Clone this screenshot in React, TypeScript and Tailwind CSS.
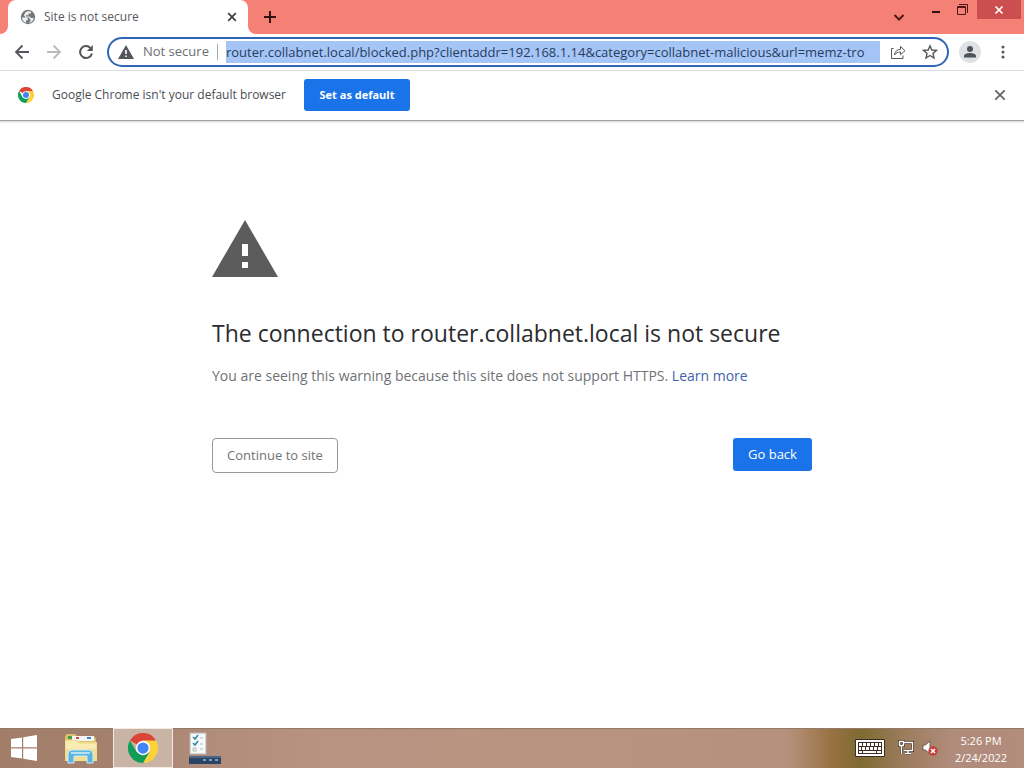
import type { ReactNode } from "react";

const url =
  "router.collabnet.local/blocked.php?clientaddr=192.168.1.14&category=collabnet-malicious&url=memz-tro";

function ChromeLogo({ className }: { className: string }) {
  return (
    <svg viewBox="0 0 48 48" className={className} aria-hidden="true">
      <path d="M24 24 L3.2 12 A24 24 0 0 1 44.8 12 Z" fill="#db4437" />
      <path d="M24 12 H44.8 A24 24 0 0 1 24 48 L34.4 30 Z" fill="#fdd13a" />
      <path d="M3.2 12 L13.6 30 L24 36 L34.4 30 L24 48 A24 24 0 0 1 3.2 12 Z" fill="#109d58" />
      <circle cx="24" cy="24" r="11.5" fill="#fff" />
      <circle cx="24" cy="24" r="9" fill="#4285f4" />
    </svg>
  );
}

function Globe() {
  return (
    <svg viewBox="0 0 16 16" className="h-4 w-4 shrink-0" aria-hidden="true">
      <circle cx="8" cy="8" r="7.2" fill="#74777b" />
      <path d="M2 8.5 L5.5 8.5 Q8 8.5 8 10.5 L7 11.5 L6 11.5 L6 14 C3.5 13 2 11 2 8.5Z M8.5 2 L11 2.8 V4.5 H8.5 V6.2 H6 V7.5 H9.5 L11 9 H13.8 C13.5 11.7 11 13.8 8.8 14.2 L10.5 12 V10.5 L8.5 8.5 H5.8 L4 6.5 C4.5 4 6 2.2 8.5 2Z" fill="#eceded" />
    </svg>
  );
}

function Stroke({ d, className, width = 2 }: { d: string; className: string; width?: number }) {
  return (
    <svg viewBox="0 0 16 16" className={className} fill="none" stroke="currentColor" strokeWidth={width} aria-hidden="true">
      <path d={d} />
    </svg>
  );
}

function IconButton({ label, className, children }: { label: string; className: string; children: ReactNode }) {
  return (
    <button type="button" aria-label={label} className={`flex shrink-0 items-center justify-center ${className}`}>
      {children}
    </button>
  );
}

function TabStrip() {
  return (
    <div className="flex h-[34px] items-start bg-[#f58176]">
      <div className="flex h-[34px] items-end">
        <svg viewBox="0 0 8 8" className="h-2 w-2" aria-hidden="true">
          <path d="M8 0 V8 H0 A8 8 0 0 0 8 0" fill="#fff" />
        </svg>
        <div className="flex h-[34px] w-60 items-center rounded-t-lg bg-white pr-2 pl-3">
          <Globe />
          <span className="ml-2 flex-1 text-xs text-[#55595d]">Site is not secure</span>
          <IconButton label="Close tab" className="h-4 w-4 text-[#3c4043]">
            <Stroke d="M4.2 4.2 L11.8 11.8 M11.8 4.2 L4.2 11.8" width={1.7} className="h-4 w-4" />
          </IconButton>
        </div>
        <svg viewBox="0 0 8 8" className="h-2 w-2" aria-hidden="true">
          <path d="M0 0 V8 H8 A8 8 0 0 1 0 0" fill="#fff" />
        </svg>
      </div>
      <IconButton label="New tab" className="h-[34px] w-7 text-[#32110f]">
        <Stroke d="M8 2 V14 M2 8 H14" className="h-4 w-4" />
      </IconButton>
      <div className="flex-1" />
      <IconButton label="Search tabs" className="h-[34px] w-6 text-[#4d1815]">
        <Stroke d="M3.5 6 L8 10.5 L12.5 6" className="h-4 w-4" />
      </IconButton>
      <IconButton label="Minimize" className="ml-3 h-5 w-[26px] text-[#32110f]">
        <Stroke d="M4 10 H12" className="h-4 w-4" />
      </IconButton>
      <IconButton label="Restore" className="h-[18px] w-[26px] text-[#4d1815]">
        <Stroke d="M3.5 5.5 H11.5 V13.5 H3.5 Z M3.5 6.5 H11.5 M5 3.5 H13.5 V12" width={1} className="h-4 w-4" />
      </IconButton>
      <IconButton label="Close" className="mr-[3px] ml-[2px] h-[19px] w-11 bg-[#ca4f4e] text-white">
        <Stroke d="M4.5 4.5 L11.5 11.5 M11.5 4.5 L4.5 11.5" width={1.7} className="h-4 w-4" />
      </IconButton>
    </div>
  );
}

function Toolbar() {
  return (
    <div className="flex h-[37px] items-center border-b border-[#dcdee1] px-2 text-[#53565a]">
      <IconButton label="Back" className="h-7 w-7">
        <Stroke d="M15 8 H2 M8.5 1.5 L2 8 L8.5 14.5" width={1.8} className="h-4 w-4" />
      </IconButton>
      <IconButton label="Forward" className="ml-1 h-7 w-7 text-[#b9bbbd]">
        <Stroke d="M1 8 H14 M7.5 1.5 L14 8 L7.5 14.5" width={1.8} className="h-4 w-4" />
      </IconButton>
      <IconButton label="Reload" className="ml-1 h-7 w-7">
        <svg viewBox="0 0 16 16" className="h-4 w-4" fill="none" stroke="currentColor" strokeWidth="2" aria-hidden="true">
          <path d="M13.9 9.5 A6 6 0 1 1 12.4 3.9" />
          <path d="M14.8 1 V7 H8.8 Z" fill="currentColor" stroke="none" />
        </svg>
      </IconButton>
      <div className="ml-[7px] flex h-[30px] min-w-0 flex-1 items-center rounded-full border-2 border-[#3166b6] bg-white pr-[7px] pl-2">
        <button type="button" className="flex shrink-0 items-center text-[13px] text-[#6b6e72]">
          <svg viewBox="0 0 18 16" className="mr-2 h-4 w-[18px]" aria-hidden="true">
            <path d="M9 1 L17 15 H1 Z" fill="#53565a" />
            <path d="M8.2 6 H9.8 V10 H8.2 Z M8.2 11.4 H9.8 V13 H8.2 Z" fill="#fff" />
          </svg>
          Not secure
        </button>
        <div className="mx-2 h-4 w-px shrink-0 bg-[#a6a8ab]" />
        <input
          aria-label="Address and search bar"
          defaultValue={url}
          className="h-[22px] min-w-0 flex-1 bg-[#a5c5f7] text-[13px] text-[#283c5c] outline-none"
        />
        <IconButton label="Share this page" className="ml-2 h-5 w-5">
          <Stroke
            d="M3.5 4.5 H1.5 V14.5 H13 V11.5 M4.5 11 C4.8 7.5 7 5.5 10.5 5.4 V2.5 L15 6.7 L10.5 10.7 V8 C7.8 8 6 9 4.5 11Z"
            width={1}
            className="h-4 w-4"
          />
        </IconButton>
        <IconButton label="Bookmark this tab" className="ml-3 h-5 w-5">
          <Stroke d="M8 1.8 L9.8 6 L14.5 6.4 L11 9.4 L12 14 L8 11.5 L4 14 L5 9.4 L1.5 6.4 L6.2 6 Z" width={1.4} className="h-4 w-4" />
        </IconButton>
      </div>
      <IconButton label="You" className="ml-[10px] h-[22px] w-[22px] rounded-full bg-[#dfe1e5]">
        <svg viewBox="0 0 16 16" className="h-4 w-4" fill="#4d535c" aria-hidden="true">
          <circle cx="8" cy="5" r="3" />
          <path d="M2 13.5 V12 C2 9.8 6 9 8 9 S14 9.8 14 12 V13.5 Z" />
        </svg>
      </IconButton>
      <IconButton label="Menu" className="ml-2 -mr-px h-7 w-7">
        <svg viewBox="0 0 16 16" className="h-4 w-4" fill="currentColor" aria-hidden="true">
          <circle cx="8" cy="3" r="1.5" />
          <circle cx="8" cy="8" r="1.5" />
          <circle cx="8" cy="13" r="1.5" />
        </svg>
      </IconButton>
    </div>
  );
}

function InfoBar() {
  return (
    <div className="flex h-[50px] items-center border-b border-[#a2a2a2] pr-4 pb-px pl-[18px] shadow-[0_1px_2px_#d0d0d0]">
      <ChromeLogo className="h-4 w-4" />
      <p className="ml-[18px] w-60 text-xs whitespace-nowrap text-[#4a4d51]">Google Chrome isn't your default browser</p>
      <button type="button" className="ml-3 h-8 w-[106px] rounded-[3px] bg-[#1a73e8] text-[11px] font-bold text-white">
        Set as default
      </button>
      <div className="flex-1" />
      <IconButton label="Dismiss" className="h-4 w-4 text-[#63666a]">
        <Stroke d="M3.3 3.3 L12.7 12.7 M12.7 3.3 L3.3 12.7" width={1.8} className="h-4 w-4" />
      </IconButton>
    </div>
  );
}

function Interstitial() {
  return (
    <main className="flex-1 px-6">
      <div className="mx-auto w-full max-w-[600px] pt-[99px]">
        <svg viewBox="0 0 66 57" className="h-[57px] w-[66px]" aria-hidden="true">
          <path d="M33 0 L66 57 H0 Z" fill="#5c5c5c" />
          <path d="M30 24 H36 V36 H30 Z M30 42 H36 V48 H30 Z" fill="#fff" />
        </svg>
        <h1 className="mt-10 text-[23px] leading-8 text-[#2b2c2f]">
          The connection to router.collabnet.local is not secure
        </h1>
        <p className="mt-4 text-sm leading-[22px] text-[#6f7276]">
          You are seeing this warning because this site does not support HTTPS.{" "}
          <a href="#learn-more" className="text-[#3f62ae]">Learn more</a>
        </p>
        <div className="mt-[51px] flex items-start justify-between">
          <button type="button" className="h-[35px] w-[126px] rounded border border-[#97999c] text-[13px] text-[#6f7276]">
            Continue to site
          </button>
          <button type="button" className="h-[33px] w-[79px] rounded-[3px] bg-[#1a73e8] text-[13px] text-white">
            Go back
          </button>
        </div>
      </div>
    </main>
  );
}

function Taskbar() {
  return (
    <footer className="flex h-10 items-center bg-[linear-gradient(90deg,#a27e69_0%,#a4816e_12%,#b08c7a_20%,#b89382_32%,#b8947f_60%,#b5917b_77%,#9a7344_81%,#7e6a32_84%,#9a7b5a_88%,#b08c7c_93%,#b28c7c_100%)] shadow-[inset_0_1px_0_#937a68] text-white">
      <IconButton label="Start" className="ml-[10px] h-10 w-7">
        <svg viewBox="0 0 28 28" className="h-7 w-7" fill="#fff" aria-hidden="true">
          <path d="M1 5 L12 3.4 V13.3 H1 Z M13.2 3.2 L27 1 V13.3 H13.2 Z M1 14.5 H12 V24.6 L1 23 Z M13.2 14.5 H27 V27 L13.2 24.8 Z" />
        </svg>
      </IconButton>
      <IconButton label="File Explorer" className="ml-[25px] h-10 w-9">
        <svg viewBox="0 0 36 32" className="h-8 w-9" aria-hidden="true">
          <path d="M2 4 L4 2 H12 L14 4 H31 L33 7 V29 H2 Z" fill="#d8c06e" />
          <path d="M5 4 H12 V7 H5 Z" fill="#4c9d43" />
          <path d="M9 4 H31 V9 H9 Z" fill="#f4f7f5" />
          <path d="M13 5 H16 V7 H13 Z" fill="#d64b31" />
          <path d="M24 5 H28 V7 H24 Z" fill="#4088c5" />
          <path d="M2 8 H14 L17 10 H34 V29 H2 Z" fill="#f2de91" />
          <path d="M3 9 H13 L16 12 H33 V17 H3 Z" fill="#f9ebb2" />
          <path d="M5 31 V22 Q5 18 9 18 H26 Q30 18 30 22 V31 H24 V24 H11 V31 Z" fill="#5cb4dd" stroke="#c6efff" />
          <path d="M8 20 H27 V22 H8 Z" fill="#b3e3f4" />
        </svg>
      </IconButton>
      <IconButton label="Google Chrome" className="ml-[14px] h-10 w-[60px] border border-[#f2e9e3] bg-[#c8b3a5]">
        <ChromeLogo className="h-[30px] w-[30px]" />
      </IconButton>
      <IconButton label="Task list" className="ml-4 h-10 w-8">
        <svg viewBox="0 0 32 34" className="h-[34px] w-8" aria-hidden="true">
          <path d="M1 2 H17 V23 H1 Z" fill="#f7f8f8" stroke="#b8b4b0" />
          <path d="M4 6 L6 8 L9 4 M4 12 L6 14 L9 10" fill="none" stroke="#3289a5" strokeWidth="1.6" />
          <path d="M4 17 H7 V20 H4 Z M11 7 H14 M11 13 H14 M11 18 H14" fill="none" stroke="#aebac0" />
          <path d="M0 25 H32 V33 H0 Z" fill="#2c4463" />
          <path d="M0 25 H32 V27 H0 Z" fill="#4a6585" />
          <path d="M14 28 H17 V30 H14 Z M20 28 H23 V30 H20 Z M26 28 H29 V30 H26 Z" fill="#7f9dbf" />
        </svg>
      </IconButton>
      <div className="flex-1" />
      <IconButton label="Touch keyboard" className="h-10 w-8">
        <svg viewBox="0 0 32 20" className="h-5 w-8" aria-hidden="true">
          <path d="M1.5 1.5 H30.5 V18.5 H1.5 Z" fill="#fff" stroke="#3f2c20" />
          <path d="M4 4 H28 V16 H4 Z" fill="#3f2c20" />
          <path
            d="M5 5 H8 V8 H5 Z M9 5 H12 V8 H9 Z M13 5 H16 V8 H13 Z M17 5 H20 V8 H17 Z M21 5 H24 V8 H21 Z M25 5 H27 V8 H25 Z M5 9 H7 V12 H5 Z M8 9 H11 V12 H8 Z M12 9 H15 V12 H12 Z M16 9 H19 V12 H16 Z M20 9 H23 V12 H20 Z M24 9 H27 V12 H24 Z M5 13 H8 V15 H5 Z M9 13 H22 V15 H9 Z M23 13 H27 V15 H23 Z"
            fill="#fff"
          />
        </svg>
      </IconButton>
      <IconButton label="Network" className="ml-3 h-10 w-4">
        <svg viewBox="0 0 16 16" className="h-4 w-4" fill="none" aria-hidden="true">
          <path d="M6 2.5 H14.5 V10.5 H6 M10 11 V13.5 M7 13.5 H13 M1.5 1.5 H5.5 V5.5 H1.5 Z M3.5 5.5 V14" stroke="#49342a" strokeWidth="3" />
          <path d="M6 2.5 H14.5 V10.5 H6 M10 11 V13.5 M7 13.5 H13 M1.5 1.5 H5.5 V5.5 H1.5 Z M3.5 5.5 V14" stroke="#fff" strokeWidth="1.4" />
        </svg>
      </IconButton>
      <IconButton label="Volume muted" className="ml-2 h-10 w-4">
        <svg viewBox="0 0 16 16" className="h-4 w-4" aria-hidden="true">
          <path d="M1 5 H3.5 L8 1 V14 L3.5 10 H1 Z" fill="#fff" stroke="#59463c" strokeWidth="0.8" />
          <circle cx="11" cy="11" r="4.7" fill="#c63e3a" />
          <path d="M9 9 L13 13 M13 9 L9 13" stroke="#fff" strokeWidth="1.5" />
        </svg>
      </IconButton>
      <time dateTime="2022-02-24T17:26" className="mr-[15px] ml-[15px] flex w-14 shrink-0 flex-col items-center pt-px text-[11px] leading-[17px] whitespace-nowrap">
        <span>5:26 PM</span>
        <span>2/24/2022</span>
      </time>
    </footer>
  );
}

export default function App() {
  return (
    <div className="flex min-h-screen flex-col bg-white font-['Open_Sans',sans-serif]">
      <TabStrip />
      <Toolbar />
      <InfoBar />
      <Interstitial />
      <Taskbar />
    </div>
  );
}
